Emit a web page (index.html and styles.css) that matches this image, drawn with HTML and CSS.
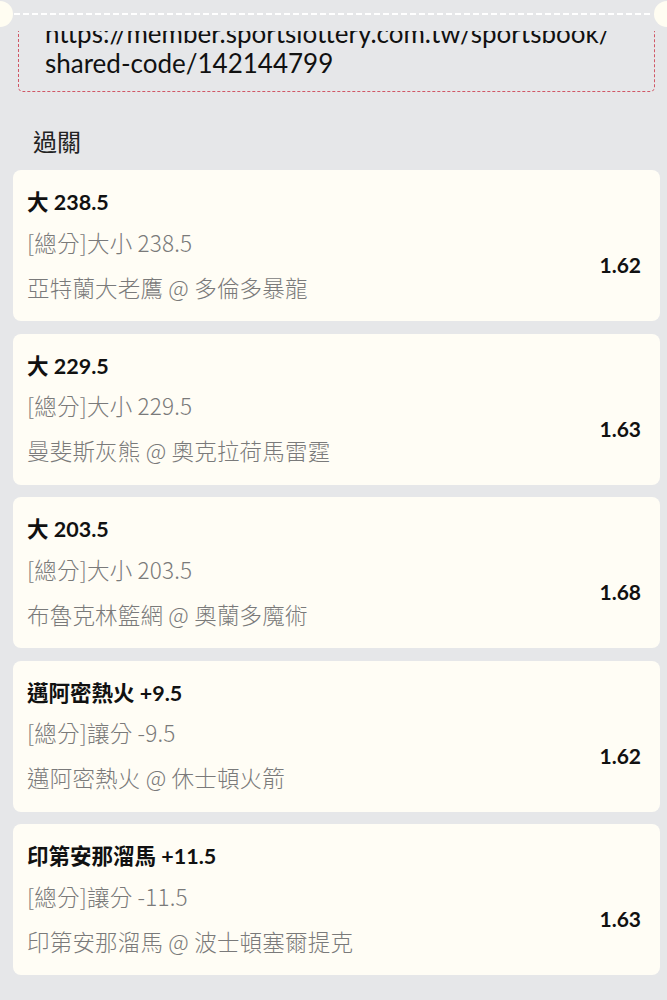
FILE: index.html
```html
<!DOCTYPE html>
<html lang="zh-Hant">
<head>
    <meta charset="UTF-8">
    <meta name="viewport" content="width=device-width, initial-scale=1.0">
    <title>過關</title>
    <link rel="stylesheet" href="styles.css">
</head>
<body>
    <header class="ticket-edge">
        <span class="notch notch-left"></span>
        <div class="perforation"></div>
        <span class="notch notch-right"></span>
    </header>

    <main class="scroll-area">
        <div class="share-box">
            https://member.sportslottery.com.tw/sportsbook/<br>shared-code/142144799
        </div>

        <h2 class="section-title">過關</h2>

        <div class="bet-list">
            <div class="bet-card">
                <div class="bet-pick">大 <span class="num">238.5</span></div>
                <div class="bet-row">
                    <div class="bet-info">
                        <div class="bet-market">[總分]大小 238.5</div>
                        <div class="bet-match">亞特蘭大老鷹 @ 多倫多暴龍</div>
                    </div>
                    <div class="bet-odds">1.62</div>
                </div>
            </div>

            <div class="bet-card">
                <div class="bet-pick">大 <span class="num">229.5</span></div>
                <div class="bet-row">
                    <div class="bet-info">
                        <div class="bet-market">[總分]大小 229.5</div>
                        <div class="bet-match">曼斐斯灰熊 @ 奧克拉荷馬雷霆</div>
                    </div>
                    <div class="bet-odds">1.63</div>
                </div>
            </div>

            <div class="bet-card">
                <div class="bet-pick">大 <span class="num">203.5</span></div>
                <div class="bet-row">
                    <div class="bet-info">
                        <div class="bet-market">[總分]大小 203.5</div>
                        <div class="bet-match">布魯克林籃網 @ 奧蘭多魔術</div>
                    </div>
                    <div class="bet-odds">1.68</div>
                </div>
            </div>

            <div class="bet-card">
                <div class="bet-pick">邁阿密熱火 <span class="num">+9.5</span></div>
                <div class="bet-row">
                    <div class="bet-info">
                        <div class="bet-market">[總分]讓分 -9.5</div>
                        <div class="bet-match">邁阿密熱火 @ 休士頓火箭</div>
                    </div>
                    <div class="bet-odds">1.62</div>
                </div>
            </div>

            <div class="bet-card">
                <div class="bet-pick">印第安那溜馬 <span class="num">+11.5</span></div>
                <div class="bet-row">
                    <div class="bet-info">
                        <div class="bet-market">[總分]讓分 -11.5</div>
                        <div class="bet-match">印第安那溜馬 @ 波士頓塞爾提克</div>
                    </div>
                    <div class="bet-odds">1.63</div>
                </div>
            </div>
        </div>
    </main>
</body>
</html>
```

FILE: styles.css
```css
body {
    background-color: #e6e7e9;
    color: #111;
    font-family: Lato, "Noto Sans CJK TC", sans-serif;
    margin: 0;
    height: 1000px;
    overflow: hidden;
}

/* top edge of the ticket with its perforation */
.ticket-edge {
    position: relative;
    height: 31px;
    background-color: #e6e7e9;
    z-index: 2;
}

.perforation {
    position: absolute;
    left: 14px;
    right: 14px;
    top: 13px;
    height: 2px;
    background-image: linear-gradient(to right, #fff 0 6px, transparent 6px 9px);
    background-size: 9px 2px;
}

.notch {
    position: absolute;
    top: 1px;
    width: 26px;
    height: 26px;
    border-radius: 50%;
    background-color: #fffdf2;
}

.notch-left {
    left: -13px;
}

.notch-right {
    right: -13px;
}

.scroll-area {
    position: relative;
    z-index: 1;
}

.share-box {
    margin: -22px 12px 0 18px;
    padding: 8px 10px 13px 26px;
    border: 1px dashed #d05766;
    border-radius: 5px;
    font-size: 26px;
    line-height: 30px;
    color: #111;
    white-space: nowrap;
}

.section-title {
    margin: 34px 0 14px 33px;
    font-size: 24px;
    line-height: 30px;
    font-weight: normal;
    color: #222;
    font-family: "Noto Sans CJK TC", sans-serif;
}

.bet-list {
    display: flex;
    flex-direction: column;
    gap: 12.5px;
    margin: 0 7px 0 13px;
}

.bet-card {
    height: 151px;
    box-sizing: border-box;
    background-color: #fffdf5;
    border-radius: 8px;
    padding: 19px 19px 0 14px;
}

.bet-pick {
    font-size: 21.5px;
    line-height: 26px;
    font-weight: bold;
    color: #111;
    margin-bottom: 4.5px;
}

.bet-row {
    display: flex;
    align-items: center;
    justify-content: space-between;
}

.bet-market,
.bet-match {
    font-family: "Noto Sans CJK TC", sans-serif;
    font-size: 22.5px;
    line-height: 45px;
    font-weight: 300;
    color: #7a7a7a;
    letter-spacing: 0.2px;
    white-space: nowrap;
}

.bet-odds {
    font-size: 21px;
    font-weight: bold;
    color: #111;
}
```
